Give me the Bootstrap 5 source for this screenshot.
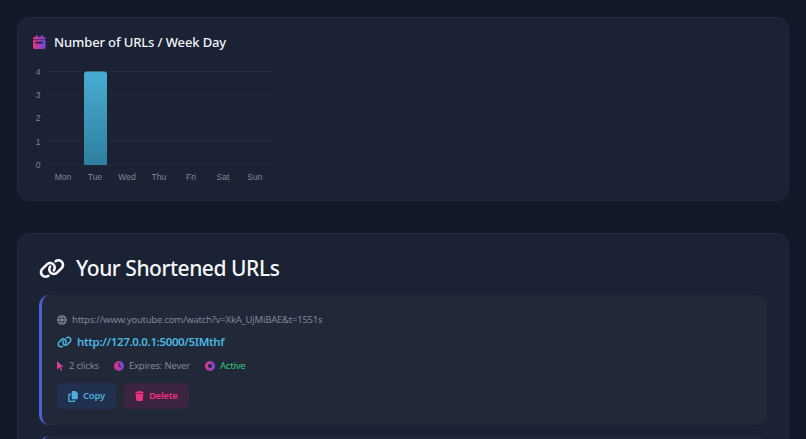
<!DOCTYPE html>
<html lang="en">
<head>
<meta charset="utf-8">
<title>Your Shortened URLs</title>
<link href="https://cdn.jsdelivr.net/npm/bootstrap@5.3.0/dist/css/bootstrap.min.css" rel="stylesheet">
<style>
html, body { height: 100vh; overflow: hidden; }
body { background: #121929; font-family: "Noto Sans", "Liberation Sans", sans-serif; padding: 17px; color: #fff; }
.panel { background: #1b2233; border: 1px solid #202839; border-radius: 12px; }
.chart-panel { height: 184px; margin-bottom: 32px; padding: 14px 15px; }
.chart-title { font-size: 13px; font-weight: 500; letter-spacing: -0.12px; line-height: 20px; color: #f1f5f9; margin: 0; }
.chart-svg { display: block; width: 260px; height: 126px; margin-top: 10px; margin-left: -16px; }
.chart-svg text { font-family: "Liberation Sans", sans-serif; font-size: 8.600px; fill: #7f8797; }
.urls-panel { padding: 21px 21px; height: 400px; }
.urls-title { font-size: 21px; font-weight: 500; letter-spacing: -0.45px; line-height: 26px; margin: 0 0 14px 0; gap: 11px; color: #f5f7fa; }
.url-item { background: #212837; border-radius: 10px; border-left: 3px solid #4a5fd6; padding: 17px 15px 15px; height: 130px; margin-bottom: 11px; }
.orig-url { font-size: 9.500px; letter-spacing: -0.22px; line-height: 16px; color: #7f8796; gap: 5px; }
.short-url { font-size: 11.500px; font-weight: 600; letter-spacing: -0.35px; line-height: 18px; color: #4bb8e2; gap: 5px; margin-top: 5px; text-decoration: none; }
.meta-row { font-size: 9.500px; letter-spacing: -0.2px; line-height: 16px; color: #7f8796; gap: 15px; margin-top: 7px; }
.meta-row .active-state { color: #34c77b; }
.item-meta { gap: 5px; }
.action-btn { font-size: 9.500px; font-weight: 600; letter-spacing: -0.25px; line-height: 16px; padding: 5px 11px; border: 0; border-radius: 5px; gap: 5px; }
.copy-btn, .copy-btn:hover { background: #21304f; color: #4aaedb; }
.delete-btn, .delete-btn:hover { background: #3b243f; color: #ec2f7f; }
.btn-row { gap: 8px; margin-top: 9px; }
</style>
</head>
<body>
<svg width="0" height="0" class="position-absolute">
  <defs>
    <linearGradient id="pinkblue" x1="0" y1="0" x2="1" y2="0">
      <stop offset="0" stop-color="#ec2f7f"/><stop offset="1" stop-color="#6a4be0"/>
    </linearGradient>
    <linearGradient id="barfill" x1="0" y1="0" x2="0" y2="1">
      <stop offset="0" stop-color="#48add2"/><stop offset="1" stop-color="#2f7f9f"/>
    </linearGradient>
  </defs>
</svg>

<section class="panel chart-panel">
  <h2 class="chart-title d-flex align-items-center">
    <svg width="12.500" height="14" viewBox="0 0 13 15" preserveAspectRatio="none" style="margin-right:8.500px;flex:none" aria-hidden="true">
      <path fill="url(#pinkblue)" d="M3 0h1.6v2h3.8V0H10v2h1.2A1.8 1.8 0 0 1 13 3.8v9.4a1.8 1.8 0 0 1-1.8 1.8H1.8A1.8 1.8 0 0 1 0 13.200V3.800A1.800 1.800 0 0 1 1.800 2H3z"/>
      <rect x="2.500" y="7.300" width="8" height="1.800" fill="#1b2233"/>
      <rect x="0" y="4.800" width="13" height="0.700" fill="#1b2233"/>
    </svg>
    Number of URLs / Week Day
  </h2>
  <svg class="chart-svg" viewBox="0 0 260 126" aria-label="Bar chart">
    <g stroke="#262e3e" stroke-width="0.700">
      <line x1="30" x2="255" y1="9.500" y2="9.500"/>
      <line x1="30" x2="255" y1="33" y2="33"/>
      <line x1="30" x2="255" y1="56" y2="56"/>
      <line x1="30" x2="255" y1="79.500" y2="79.500"/>
      <line x1="30" x2="255" y1="103" y2="103"/>
    </g>
    <path d="M67 12.500a3 3 0 0 1 3-3h17a3 3 0 0 1 3 3V103H67z" fill="url(#barfill)"/>
    <g text-anchor="end">
      <text x="23.500" y="12.500">4</text><text x="23.500" y="36">3</text><text x="23.500" y="59">2</text><text x="23.500" y="82.500">1</text><text x="23.500" y="106">0</text>
    </g>
    <g text-anchor="middle">
      <text x="46" y="118">Mon</text><text x="78" y="118">Tue</text><text x="110" y="118">Wed</text><text x="142" y="118">Thu</text><text x="174" y="118">Fri</text><text x="206" y="118">Sat</text><text x="238" y="118">Sun</text>
    </g>
  </svg>
</section>

<section class="panel urls-panel">
  <h1 class="urls-title d-flex align-items-center">
    <svg width="26" height="21" viewBox="0 0 640 512" fill="#f5f7fa" aria-hidden="true"><path d="M579.8 267.7c56.5-56.5 56.5-148 0-204.500c-50-50-128.800-56.500-186.300-15.400l-1.600 1.100c-14.400 10.300-17.700 30.300-7.400 44.600s30.300 17.700 44.600 7.400l1.600-1.100c32.100-22.900 76-19.300 103.800 8.600c31.500 31.500 31.500 82.500 0 114L422.300 334.800c-31.500 31.500-82.500 31.500-114 0c-27.900-27.900-31.500-71.800-8.600-103.800l1.100-1.600c10.300-14.400 6.900-34.400-7.400-44.600s-34.400-6.900-44.600 7.400l-1.100 1.600C206.500 251.200 213 330 263 380c56.500 56.500 148 56.500 204.500 0L579.800 267.700zM60.200 244.300c-56.500 56.500-56.500 148 0 204.500c50 50 128.800 56.500 186.300 15.400l1.600-1.100c14.400-10.300 17.700-30.300 7.400-44.600s-30.300-17.700-44.600-7.400l-1.600 1.100c-32.100 22.900-76 19.300-103.800-8.600C74 372 74 321 105.500 289.500L217.700 177.200c31.500-31.500 82.500-31.500 114 0c27.900 27.900 31.500 71.800 8.600 103.900l-1.100 1.600c-10.300 14.400-6.900 34.400 7.400 44.600s34.400 6.900 44.600-7.400l1.100-1.600C433.500 260.800 427 182 377 132c-56.500-56.500-148-56.500-204.500 0L60.200 244.300z"/></svg>
    Your Shortened URLs
  </h1>

  <article class="url-item">
    <div class="orig-url d-flex align-items-center">
      <svg width="10" height="10" viewBox="0 0 20 20" fill="none" stroke="#858d9c" stroke-width="2.200" aria-hidden="true"><circle cx="10" cy="10" r="8.500" fill="#858d9c"/><g stroke="#212837" stroke-width="1.300" fill="none"><ellipse cx="10" cy="10" rx="4" ry="8.500"/><path d="M1.500 7h17M1.500 13h17"/></g></svg>
      <span>https://www.youtube.com/watch?v=XkA_UjMiBAE&amp;t=1551s</span>
    </div>
    <a class="short-url d-flex align-items-center" href="#">
      <svg width="15" height="12" viewBox="0 0 640 512" fill="#4bb8e2" aria-hidden="true"><path d="M579.8 267.7c56.5-56.5 56.5-148 0-204.500c-50-50-128.800-56.500-186.300-15.400l-1.600 1.100c-14.400 10.300-17.700 30.300-7.400 44.600s30.300 17.700 44.600 7.400l1.600-1.100c32.100-22.900 76-19.300 103.800 8.600c31.500 31.500 31.500 82.500 0 114L422.300 334.800c-31.500 31.500-82.500 31.500-114 0c-27.900-27.900-31.500-71.800-8.600-103.800l1.100-1.600c10.300-14.400 6.900-34.400-7.400-44.600s-34.400-6.900-44.600 7.400l-1.100 1.600C206.500 251.200 213 330 263 380c56.500 56.500 148 56.500 204.500 0L579.800 267.700zM60.200 244.300c-56.500 56.500-56.500 148 0 204.500c50 50 128.800 56.500 186.300 15.400l1.600-1.100c14.400-10.300 17.700-30.300 7.400-44.600s-30.300-17.700-44.600-7.400l-1.600 1.100c-32.100 22.900-76 19.300-103.800-8.600C74 372 74 321 105.500 289.500L217.700 177.200c31.500-31.500 82.500-31.500 114 0c27.900 27.900 31.500 71.800 8.600 103.900l-1.100 1.600c-10.300 14.400-6.900 34.400 7.400 44.600s34.400 6.900 44.600-7.400l1.100-1.600C433.500 260.800 427 182 377 132c-56.500-56.500-148-56.500-204.500 0L60.200 244.300z"/></svg>
      <span>http://127.0.0.1:5000/5IMthf</span>
    </a>
    <div class="meta-row d-flex align-items-center">
      <span class="item-meta d-flex align-items-center"><svg width="7" height="10" viewBox="0 0 7 10" aria-hidden="true"><path d="M0 0l6.500 6H3.700l1.600 3.200-1.200.7L2.500 6.600 0 8.800z" fill="#d63f9c"/></svg><span>2 clicks</span></span>
      <span class="item-meta d-flex align-items-center"><svg width="10" height="10" viewBox="0 0 20 20" aria-hidden="true"><circle cx="10" cy="10" r="10" fill="url(#pinkblue)"/><path d="M10 4v6.500l4 2.500" stroke="#212837" stroke-width="2" fill="none"/></svg><span>Expires: Never</span></span>
      <span class="item-meta d-flex align-items-center"><svg width="10" height="10" viewBox="0 0 20 20" aria-hidden="true"><circle cx="10" cy="10" r="10" fill="url(#pinkblue)"/><circle cx="10" cy="10" r="4" fill="#212837"/></svg><span class="active-state">Active</span></span>
    </div>
    <div class="btn-row d-flex">
      <button class="btn action-btn copy-btn d-flex align-items-center" type="button"><svg width="10" height="11" viewBox="0 0 448 512" fill="#4aaedb" aria-hidden="true"><path d="M208 0H332.100c12.700 0 24.900 5.100 33.900 14.100l67.900 67.900c9 9 14.100 21.200 14.100 33.900V336c0 26.500-21.500 48-48 48H208c-26.500 0-48-21.500-48-48V48c0-26.500 21.500-48 48-48zM48 128h80v64H64V448H256V416h64v48c0 26.500-21.500 48-48 48H48c-26.500 0-48-21.500-48-48V176c0-26.500 21.500-48 48-48z"/></svg><span>Copy</span></button>
      <button class="btn action-btn delete-btn d-flex align-items-center" type="button"><svg width="9" height="10" viewBox="0 0 448 512" fill="#ec2f7f" aria-hidden="true"><path d="M135.200 17.700L128 32H32C14.300 32 0 46.300 0 64S14.300 96 32 96H416c17.700 0 32-14.300 32-32s-14.300-32-32-32H320l-7.200-14.300C307.400 6.800 296.300 0 284.200 0H163.800c-12.100 0-23.200 6.800-28.600 17.700zM416 128H32L53.200 467c1.600 25.300 22.600 45 47.900 45H346.900c25.300 0 46.300-19.700 47.900-45L416 128z"/></svg><span>Delete</span></button>
    </div>
  </article>
  <article class="url-item"></article>
</section>

<script src="https://cdn.jsdelivr.net/npm/bootstrap@5.3.0/dist/js/bootstrap.bundle.min.js"></script>
</body>
</html>
